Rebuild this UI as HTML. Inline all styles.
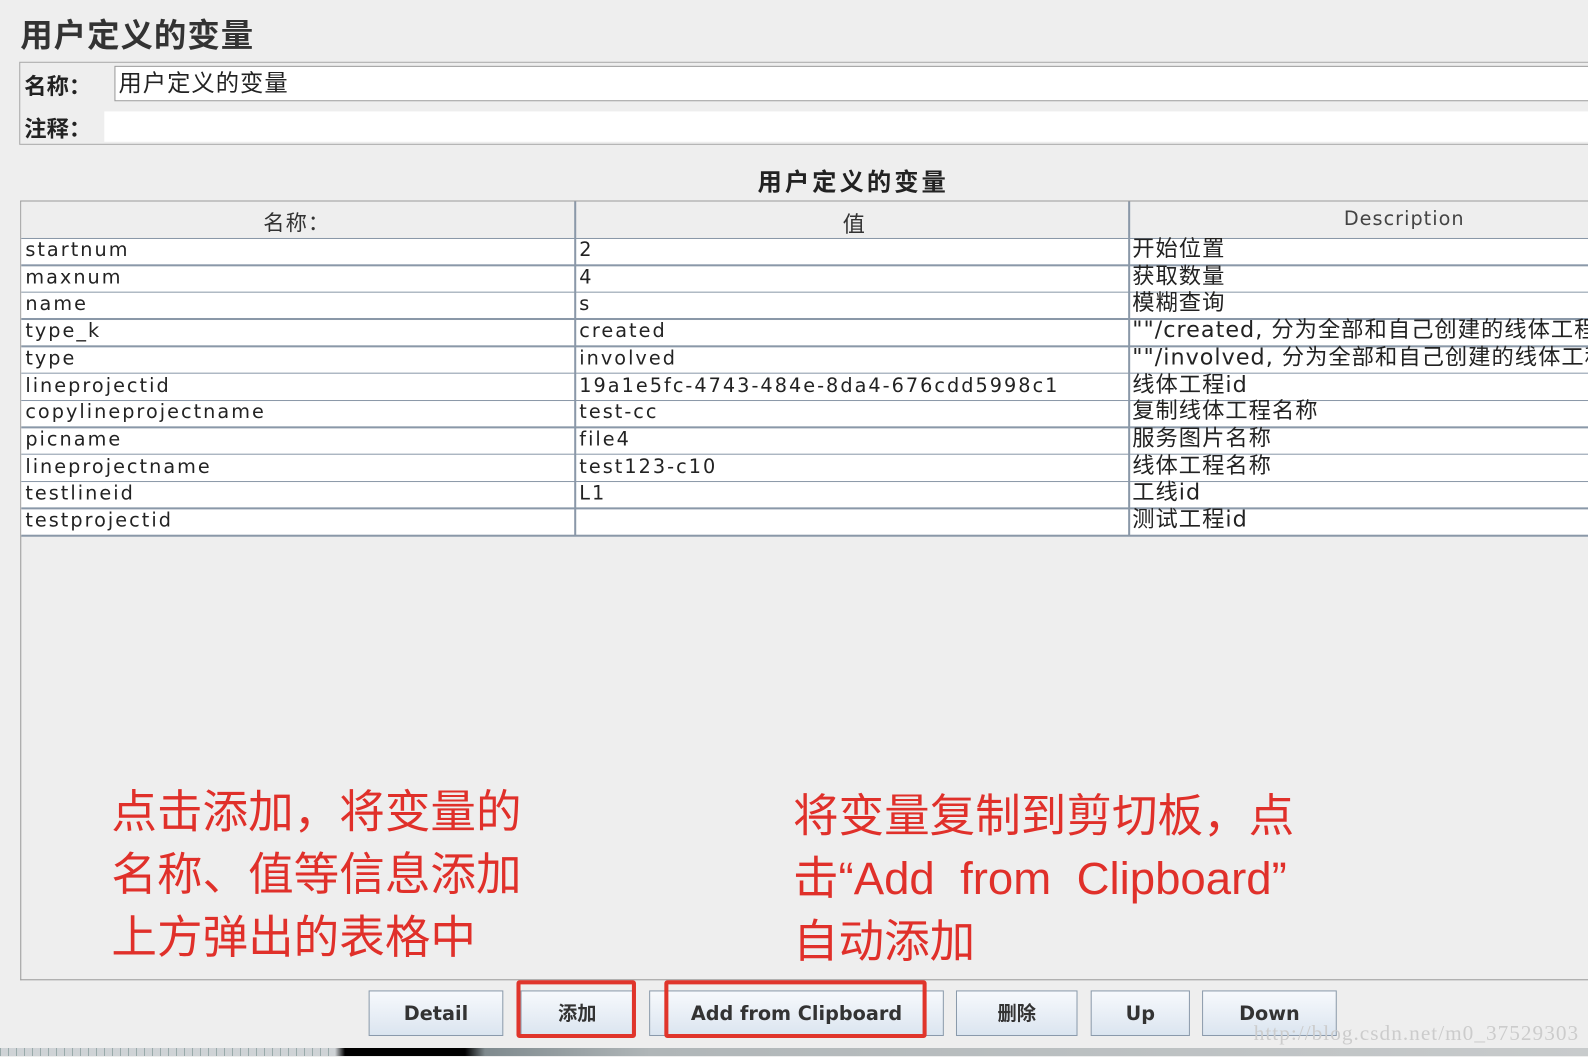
<!DOCTYPE html>
<html><head><meta charset="utf-8"><style>
body{margin:0;width:1588px;height:1056px;background:#eeeeee;position:relative;overflow:hidden;font-family:"Liberation Sans","Noto Sans CJK SC",sans-serif;color:#222}
#w{position:absolute;left:0;top:0;width:1570px;height:1044px;transform:scale(1.0127);transform-origin:0 0}
.a{position:absolute;white-space:nowrap}
.cell{position:absolute;font-size:19px;line-height:26px;white-space:nowrap;overflow:hidden;font-family:"DejaVu Sans","Noto Sans CJK SC",sans-serif;letter-spacing:2px;color:#222}
.btn{position:absolute;top:978px;height:45px;border:1px solid #8a9aab;background:linear-gradient(#f7f9fc,#dbe5f0);font-weight:bold;font-size:19px;text-align:center;line-height:45px;color:#333;box-sizing:border-box;font-family:"DejaVu Sans","Noto Sans CJK SC",sans-serif}
.red{position:absolute;border:4px solid #e0352b;border-radius:3px;box-sizing:border-box}
.ann{position:absolute;color:#e0302a;font-size:45px;line-height:62px;font-family:"Liberation Sans","Noto Sans CJK SC",sans-serif;white-space:nowrap}
</style></head><body><div id="w">
<div class="a" style="left:20px;top:10px;font-size:32px;font-weight:bold;color:#333;letter-spacing:1px">用户定义的变量</div>
<div class="a" style="left:19px;top:61px;width:1580px;height:80px;border:1px solid #a8a8a8"></div>
<div class="a" style="left:24px;top:68px;font-size:22px;font-weight:bold">名称：</div>
<div class="a" style="left:113px;top:65px;width:1480px;height:33px;background:#fff;border:1px solid #999;font-size:23px;line-height:33px;padding-left:3px;letter-spacing:1px">用户定义的变量</div>
<div class="a" style="left:24px;top:110px;font-size:22px;font-weight:bold">注释：</div>
<div class="a" style="left:103px;top:110px;width:1490px;height:30px;background:#fff"></div>
<div class="a" style="left:748px;top:160px;font-size:24px;font-weight:bold;letter-spacing:3px">用户定义的变量</div>
<div class="a" style="left:20px;top:198px;width:1580px;height:768px;border-left:1px solid #999;border-top:1px solid #999;border-bottom:1px solid #999"></div>
<div class="a" style="left:21px;top:199px;width:1570px;height:36px;background:#eeeeee;border-bottom:2px solid #8a98a8"></div>
<div class="a" style="left:21px;top:236px;width:1570px;height:293px;background:#fff"></div>
<div class="a" style="left:567px;top:199px;width:2px;height:330px;background:#8a98a8"></div>
<div class="a" style="left:1114px;top:199px;width:2px;height:330px;background:#8a98a8"></div>
<div class="a" style="left:260px;top:204px;font-size:21px;color:#333;letter-spacing:1px">名称：</div>
<div class="a" style="left:832px;top:204px;font-size:22px;color:#333">值</div>
<div class="a" style="left:1327px;top:205px;font-size:19px;color:#444;font-family:'DejaVu Sans',sans-serif;letter-spacing:1px">Description</div>
<div id="rows"></div>
<script>
var d=[["startnum","2","开始位置"],["maxnum","4","获取数量"],["name","s","模糊查询"],["type_k","created","\"\"/created, 分为全部和自己创建的线体工程"],["type","involved","\"\"/involved, 分为全部和自己创建的线体工程"],["lineprojectid","19a1e5fc-4743-484e-8da4-676cdd5998c1","线体工程id"],["copylineprojectname","test-cc","复制线体工程名称"],["picname","file4","服务图片名称"],["lineprojectname","test123-c10","线体工程名称"],["testlineid","L1","工线id"],["testprojectid","","测试工程id"]];
var h="";for(var i=0;i<d.length;i++){var t=235+i*26.7;
h+='<div class="a" style="left:21px;top:'+(t+26)+'px;width:1570px;height:1.5px;background:#8a98a8"></div>';
h+='<div class="cell" style="left:25px;top:'+(t-1)+'px">'+d[i][0]+'</div>';
h+='<div class="cell" style="left:572px;top:'+(t-1)+'px">'+d[i][1]+'</div>';
h+='<div class="cell" style="left:1118px;top:'+(t-1)+'px;width:470px;font-size:22px;letter-spacing:1px">'+d[i][2]+'</div>';}
document.getElementById("rows").innerHTML=h;
</script>
<div class="ann" style="left:110px;top:771px">点击添加，将变量的<br>名称、值等信息添加<br>上方弹出的表格中</div>
<div class="ann" style="left:783px;top:775px">将变量复制到剪切板，点<br>击“Add&nbsp; from&nbsp; Clipboard”<br>自动添加</div>
<div class="btn" style="left:364px;width:133px">Detail</div>
<div class="btn" style="left:514px;width:112px">添加</div>
<div class="btn" style="left:641px;width:291px">Add from Clipboard</div>
<div class="btn" style="left:944px;width:120px">删除</div>
<div class="btn" style="left:1077px;width:98px">Up</div>
<div class="btn" style="left:1187px;width:133px">Down</div>
<div class="red" style="left:510px;top:968px;width:118px;height:57px"></div>
<div class="red" style="left:656px;top:968px;width:259px;height:57px"></div>
<div class="a" style="left:1238px;top:1008px;font-size:21px;color:#ccc;font-family:'Liberation Serif',serif;letter-spacing:1px">http://blog.csdn.net/m0_37529303</div>
</div>
<div class="a" style="left:0;top:1048px;width:1588px;height:8px;background:linear-gradient(90deg,#cfd3d6 0,#cfd3d6 335px,#000 345px,#000 465px,#7f8a8e 485px,#b0b6b8 650px,#c8cbcc 1588px)"></div>
<div class="a" style="left:0;top:1048px;width:335px;height:8px;background:repeating-linear-gradient(90deg,#9aa 0,#9aa 1px,transparent 1px,transparent 8px)"></div>
</body></html>
